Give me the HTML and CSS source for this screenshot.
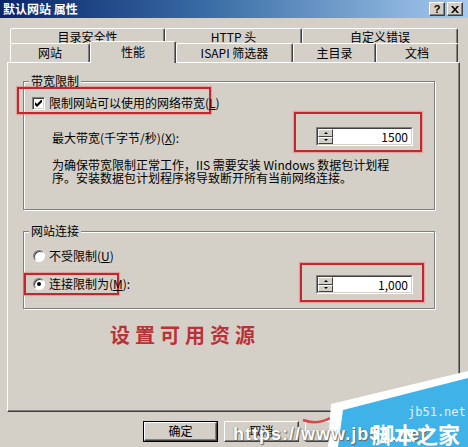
FILE: index.html
```html
<!DOCTYPE html>
<html lang="zh-CN">
<head>
    <meta charset="UTF-8">
    <title>默认网站 属性</title>
    <link rel="stylesheet" href="styles.css">
</head>
<body>
    <div class="window">
        <div class="titlebar">
            <span class="title">默认网站 属性</span>
            <div class="title-buttons">
                <span class="tb-btn">?</span>
                <span class="tb-btn">
                    <svg width="8" height="7" viewBox="0 0 8 7"><path d="M0 0h2l2 2.5L6 0h2L5 3.5 8 7H6L4 4.5 2 7H0l3-3.5z" fill="#000"/></svg>
                </span>
            </div>
        </div>

        <!-- two rows of tabs, the front row holds the selected one -->
        <div class="tab-row back">
            <div class="tab tab-security">目录安全性</div>
            <div class="tab tab-http">HTTP 头</div>
            <div class="tab tab-errors">自定义错误</div>
        </div>
        <div class="tab-row front">
            <div class="tab tab-site">网站</div>
            <div class="tab tab-perf selected">性能</div>
            <div class="tab tab-isapi">ISAPI 筛选器</div>
            <div class="tab tab-home">主目录</div>
            <div class="tab tab-docs">文档</div>
        </div>

        <div class="panel">
            <div class="group group-bandwidth">
                <div class="group-title">带宽限制</div>
                <div class="mark mark-check">
                    <span class="checkbox">
                        <svg width="7" height="7" viewBox="0 0 7 7"><path d="M0 2v3l2 2 5-5V-1L2 4z" fill="#000"/></svg>
                    </span>
                    <span class="option-text">限制网站可以使用的网络带宽(<u>L</u>)</span>
                </div>
                <div class="field-row">
                    <span class="field-label">最大带宽(千字节/秒)(<u>X</u>):</span>
                    <div class="mark mark-spin">
                        <div class="spin">
                            <div class="spin-inner">
                                <div class="spin-buttons">
                                    <span class="spin-btn"><i class="arrow-up"></i></span>
                                    <span class="spin-btn"><i class="arrow-down"></i></span>
                                </div>
                                <span class="spin-value">1500</span>
                            </div>
                        </div>
                    </div>
                </div>
                <p class="note">为确保带宽限制正常工作，IIS 需要安装 Windows 数据包计划程<br>序。安装数据包计划程序将导致断开所有当前网络连接。</p>
            </div>

            <div class="group group-conn">
                <div class="group-title">网站连接</div>
                <div class="radio-row">
                    <span class="radio"></span>
                    <span class="option-text">不受限制(<u>U</u>)</span>
                </div>
                <div class="field-row">
                    <div class="mark mark-radio">
                        <span class="radio checked"></span>
                        <span class="option-text">连接限制为(<u>M</u>):</span>
                    </div>
                    <div class="mark mark-spin2">
                        <div class="spin">
                            <div class="spin-inner">
                                <div class="spin-buttons">
                                    <span class="spin-btn"><i class="arrow-up"></i></span>
                                    <span class="spin-btn"><i class="arrow-down"></i></span>
                                </div>
                                <span class="spin-value">1,000</span>
                            </div>
                        </div>
                    </div>
                </div>
            </div>

            <div class="caption">设置可用资源</div>
        </div>

        <div class="buttons">
            <div class="btn default"><span class="btn-face">确定</span></div>
            <div class="btn"><span class="btn-face">取消</span></div>
            <div class="btn"><span class="btn-face">应用</span></div>
        </div>
    </div>

    <!-- site watermark pasted over the corner -->
    <div class="watermark">
        <svg class="wm-shape" width="468" height="447" viewBox="0 0 468 447">
            <path d="M303 420c8 3 18 3 27-2" stroke="#d84848" stroke-width="2.5" fill="none"/>
            <polygon points="331,404 468,371 468,447 328,447" fill="#fff"/>
            <polygon points="343,410 468,378 468,447 338,447" fill="#3fb2e8"/>
        </svg>
        <span class="wm-url">https://www.jb51.net</span>
        <span class="wm-domain">jb51.net</span>
        <span class="wm-name">脚本之家</span>
    </div>
</body>
</html>
```

FILE: styles.css
```css
body {
    margin: 0;
    width: 468px;
    height: 447px;
    overflow: hidden;
    position: relative;
    background-color: #d4d0c8;
    font-family: "Noto Sans CJK SC", sans-serif;
    font-size: 12px;
    color: #000;
}

/* Title bar */
.titlebar {
    height: 18px;
    display: flex;
    justify-content: space-between;
    align-items: center;
    background: linear-gradient(to right, #0a246a, #3a6ea5 45%, #a6caf0);
}

.title {
    color: #fff;
    font-weight: bold;
    padding-left: 3px;
    line-height: 18px;
}

.title-buttons {
    display: flex;
    gap: 2px;
    margin-right: 5px;
}

.tb-btn {
    width: 16px;
    height: 14px;
    box-sizing: border-box;
    display: flex;
    align-items: center;
    justify-content: center;
    background-color: #d4d0c8;
    border: 1px solid;
    border-color: #fff #404040 #404040 #fff;
    box-shadow: inset -1px -1px #808080;
    font-family: "Liberation Sans", sans-serif;
    font-weight: bold;
    font-size: 11px;
    line-height: 12px;
}

/* Tabs */
.tab-row {
    display: flex;
    margin-left: 10px;
    width: 448px;
}

.tab-row.back {
    margin-top: 10px;
    height: 15px;
}

.tab-row.front {
    height: 19px;
}

.tab {
    box-sizing: border-box;
    text-align: center;
    border: 1px solid;
    border-bottom: none;
    border-color: #fff #404040 transparent #fff;
    border-radius: 2px 2px 0 0;
    box-shadow: inset -1px 0 #808080;
    background-color: #d4d0c8;
    white-space: nowrap;
}

.back .tab {
    height: 15px;
    line-height: 14px;
    padding-top: 1px;
}

.front .tab {
    height: 19px;
    line-height: 18px;
}

.tab-security { width: 155px; }
.tab-http { width: 137px; }
.tab-errors { width: 156px; }
.tab-site { width: 80px; }
.tab-perf { width: 86px; }
.tab-isapi { width: 117px; }
.tab-home { width: 83px; }
.tab-docs { width: 82px; }

.front .tab.selected {
    margin-top: -2px;
    height: 22px;
    line-height: 19px;
    position: relative;
    z-index: 1;
}

/* Property page */
.panel {
    box-sizing: border-box;
    margin-left: 7px;
    width: 453px;
    height: 350px;
    border: 1px solid;
    border-color: #fff #404040 #404040 #fff;
    box-shadow: inset -1px -1px #808080;
}

.group {
    box-sizing: border-box;
    margin-left: 15px;
    width: 412px;
    border: 1px solid #808080;
    box-shadow: inset 1px 1px #fff, 1px 1px #fff;
}

.group-bandwidth {
    margin-top: 18px;
    height: 129px;
}

.group-conn {
    margin-top: 21px;
    height: 78px;
}

.group-title {
    display: table;
    margin: -8px 0 0 5px;
    padding: 0 2px;
    line-height: 14px;
    background-color: #d4d0c8;
}

.option-text {
    margin-left: 4px;
    line-height: 14px;
    white-space: nowrap;
}

/* red annotation boxes */
.mark {
    box-sizing: border-box;
    border: 2px solid #c3262c;
    box-shadow: 0 0 1px 1px rgba(230, 120, 120, 0.5);
}

.mark-check {
    display: flex;
    align-items: flex-start;
    margin: -1px 0 0 -7px;
    width: 194px;
    height: 27px;
    padding: 8px 0 0 13px;
}

.mark-check .option-text {
    margin-top: -1px;
}

.checkbox {
    box-sizing: border-box;
    width: 13px;
    height: 13px;
    flex-shrink: 0;
    display: flex;
    align-items: center;
    justify-content: center;
    background-color: #fff;
    border: 1px solid;
    border-color: #808080 #fff #fff #808080;
    box-shadow: inset 1px 1px #404040, inset -1px -1px #d4d0c8;
}

.field-row {
    display: flex;
    align-items: flex-start;
}

.group-bandwidth .field-row {
    margin-top: -2px;
}

.field-label {
    margin: 19px 0 0 28px;
    line-height: 14px;
    white-space: nowrap;
}

.mark-spin {
    margin-left: auto;
    margin-right: 12px;
    width: 128px;
    height: 40px;
    padding: 13px 0 0 20px;
}

.mark-spin2 {
    margin-left: auto;
    margin-right: 10px;
    width: 124px;
    height: 39px;
    padding: 10px 0 0 14px;
}

/* spin box */
.spin {
    box-sizing: border-box;
    width: 97px;
    height: 19px;
    border: 1px solid;
    border-color: #808080 #fff #fff #808080;
}

.spin-inner {
    box-sizing: border-box;
    height: 100%;
    display: flex;
    border: 1px solid;
    border-color: #404040 #d4d0c8 #d4d0c8 #404040;
    background-color: #fff;
}

.spin-buttons {
    width: 15px;
    display: flex;
    flex-direction: column;
}

.spin-btn {
    flex: 1;
    box-sizing: border-box;
    display: flex;
    align-items: center;
    justify-content: center;
    background-color: #d4d0c8;
    border: 1px solid;
    border-color: #fff #404040 #404040 #fff;
}

.arrow-up,
.arrow-down {
    width: 0;
    height: 0;
    border-left: 2px solid transparent;
    border-right: 2px solid transparent;
}

.arrow-up {
    border-bottom: 2px solid #000;
}

.arrow-down {
    border-top: 2px solid #000;
}

.spin-value {
    flex: 1;
    text-align: right;
    padding-right: 3px;
    line-height: 15px;
}

.note {
    margin: 6px 0 0 28px;
    line-height: 13px;
    white-space: nowrap;
}

/* connections */
.radio-row {
    display: flex;
    align-items: center;
    margin: 11px 0 0 9px;
    height: 14px;
}

.radio {
    box-sizing: border-box;
    width: 12px;
    height: 12px;
    flex-shrink: 0;
    border-radius: 50%;
    background-color: #fff;
    border: 1px solid;
    border-color: #808080 #fff #fff #808080;
    box-shadow: inset 1px 1px #404040;
    display: flex;
    align-items: center;
    justify-content: center;
}

.radio.checked::after {
    content: "";
    width: 4px;
    height: 4px;
    border-radius: 50%;
    background-color: #000;
}

.mark-radio {
    display: flex;
    align-items: center;
    margin-top: 10px;
    width: 95px;
    height: 22px;
    padding-left: 7px;
}

.caption {
    margin: 14px 0 0 102px;
    font-size: 20px;
    line-height: 24px;
    font-weight: bold;
    letter-spacing: 5px;
    color: #b93238;
}

/* dialog buttons */
.buttons {
    display: flex;
    gap: 6px;
    margin: 9px 0 0 143px;
}

.btn {
    box-sizing: border-box;
    width: 75px;
    height: 21px;
    display: flex;
    background-color: #d4d0c8;
    border: 1px solid;
    border-color: #fff #404040 #404040 #fff;
    box-shadow: inset -1px -1px #808080;
}

.btn-face {
    flex: 1;
    text-align: center;
    line-height: 18px;
}

.btn.default {
    border: 1px solid #000;
    box-shadow: none;
}

.btn.default .btn-face {
    border: 1px solid;
    border-color: #fff #404040 #404040 #fff;
    box-shadow: inset -1px -1px #808080;
    line-height: 16px;
}

/* watermark */
.watermark {
    position: absolute;
    left: 0;
    top: 0;
    width: 468px;
    height: 447px;
    pointer-events: none;
    z-index: 5;
}

.wm-shape {
    position: absolute;
    left: 0;
    top: 0;
}

.wm-url {
    position: absolute;
    left: 233px;
    top: 424px;
    font-family: "Liberation Sans", sans-serif;
    font-weight: bold;
    font-size: 18px;
    letter-spacing: 1px;
    color: #fff;
    text-shadow: 0 0 1px #555, 1px 1px 1px #666;
}

.wm-domain {
    position: absolute;
    left: 408px;
    top: 405px;
    font-family: "DejaVu Sans Mono", monospace;
    font-size: 12px;
    color: #e4eef6;
}

.wm-name {
    position: absolute;
    left: 372px;
    top: 420px;
    font-size: 22px;
    line-height: 26px;
    font-weight: bold;
    color: #fff;
}
```
